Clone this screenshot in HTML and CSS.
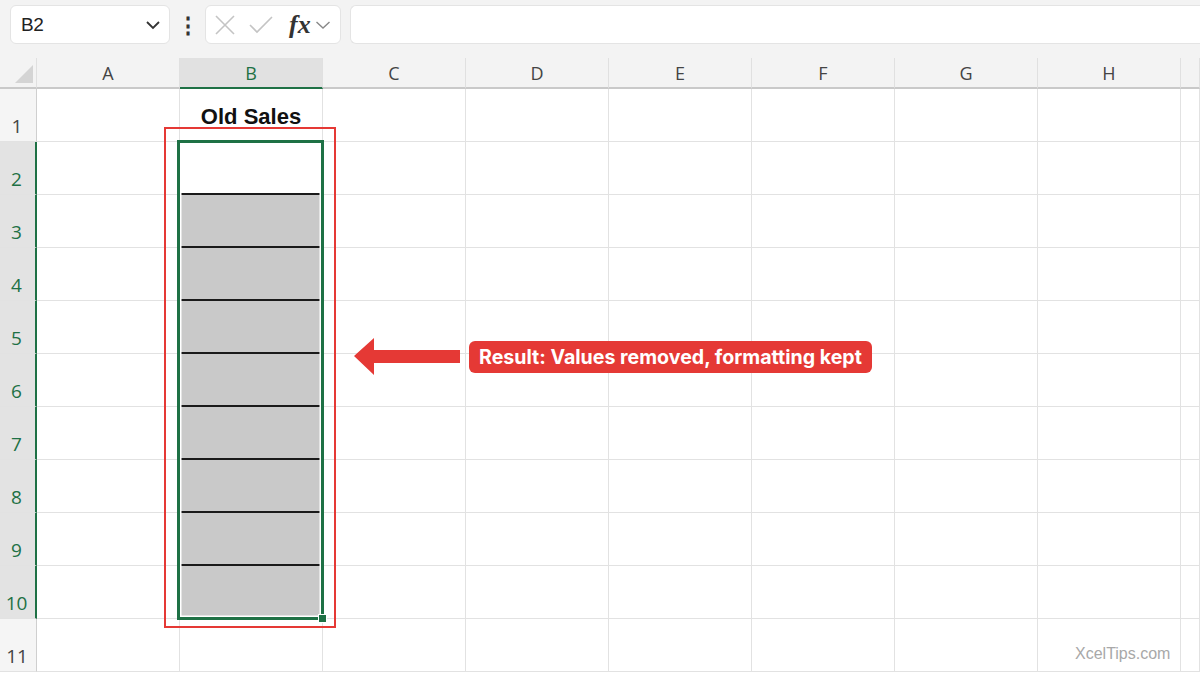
FILE: index.html
```html
<!DOCTYPE html>
<html lang="en">
<head>
  <meta charset="UTF-8" />
  <title>Old Sales</title>
  <link rel="stylesheet" href="styles.css">
</head>
<body>
  <div class="toolbar">
    <div class="name-box">
      <span>B2</span>
      <svg width="16" height="10" viewBox="0 0 16 10"><path d="M2 2 L8 8 L14 2" fill="none" stroke="#333" stroke-width="1.8"/></svg>
    </div>
    <div class="more">&#8942;</div>
    <div class="fx-box">
      <svg width="22" height="22" viewBox="0 0 22 22"><path d="M2 2 L20 20 M20 2 L2 20" stroke="#c4c4c4" stroke-width="1.6"/></svg>
      <svg width="26" height="22" viewBox="0 0 26 22"><path d="M2 11 L9 18 L24 3" fill="none" stroke="#c4c4c4" stroke-width="1.6"/></svg>
      <span class="fx">fx</span>
      <svg width="16" height="10" viewBox="0 0 16 10"><path d="M1.5 2 L8 8 L14.5 2" fill="none" stroke="#888" stroke-width="1.4"/></svg>
    </div>
    <div class="formula"></div>
  </div>

  <div class="sheet">
    <table class="grid">
      <colgroup>
        <col class="c-row"><col class="c-col"><col class="c-col"><col class="c-col"><col class="c-col">
        <col class="c-col"><col class="c-col"><col class="c-col"><col class="c-col"><col class="c-end">
      </colgroup>
      <thead>
        <tr>
          <th class="corner"><span class="tri"></span></th>
          <th>A</th><th class="sel">B</th><th>C</th><th>D</th><th>E</th><th>F</th><th>G</th><th>H</th><th></th>
        </tr>
      </thead>
      <tbody>
        <tr><th>1</th><td></td><td class="title">Old Sales</td><td></td><td></td><td></td><td></td><td></td><td></td><td></td></tr>
        <tr><th class="sel">2</th><td></td><td class="line"></td><td></td><td></td><td></td><td></td><td></td><td></td><td></td></tr>
        <tr><th class="sel">3</th><td></td><td class="shade line"></td><td></td><td></td><td></td><td></td><td></td><td></td><td></td></tr>
        <tr><th class="sel">4</th><td></td><td class="shade line"></td><td></td><td></td><td></td><td></td><td></td><td></td><td></td></tr>
        <tr><th class="sel">5</th><td></td><td class="shade line"></td><td></td><td></td><td></td><td></td><td></td><td></td><td></td></tr>
        <tr><th class="sel">6</th><td></td><td class="shade line"></td><td></td><td></td><td></td><td></td><td></td><td></td><td></td></tr>
        <tr><th class="sel">7</th><td></td><td class="shade line"></td><td></td><td></td><td></td><td></td><td></td><td></td><td></td></tr>
        <tr><th class="sel">8</th><td></td><td class="shade line"></td><td></td><td></td><td></td><td></td><td></td><td></td><td></td></tr>
        <tr><th class="sel">9</th><td></td><td class="shade line"></td><td></td><td></td><td></td><td></td><td></td><td></td><td></td></tr>
        <tr><th class="sel">10</th><td></td><td class="shade"></td><td></td><td></td><td></td><td></td><td></td><td></td><td></td></tr>
        <tr><th>11</th><td></td><td></td><td></td><td></td><td></td><td></td><td></td><td></td><td></td></tr>
      </tbody>
    </table>

    <div class="highlight"></div>
    <div class="selection"><span class="handle"></span></div>

    <svg class="arrow" width="110" height="42" viewBox="0 0 110 42">
      <polygon points="2,20 22,2 22,14 108,14 108,27 22,27 22,39" fill="#e53935"/>
    </svg>
    <div class="callout">Result: Values removed, formatting kept</div>
  </div>

  <div class="watermark">XcelTips.com</div>
</body>
</html>
```

FILE: styles.css
```css
body {
  margin: 0;
  width: 1200px;
  height: 675px;
  overflow: hidden;
  background: #fff;
  font-family: "Open Sans", "Noto Sans", sans-serif;
  position: relative;
}
.toolbar {
  height: 58px;
  box-sizing: border-box;
  padding: 5px 0 0 10px;
  background: #f3f3f3;
  display: flex;
  align-items: flex-start;
}
.name-box, .fx-box, .formula {
  height: 39px;
  box-sizing: border-box;
  background: #fff;
  border: 1px solid #e4e4e4;
  border-radius: 6px;
  display: flex;
  align-items: center;
}
.name-box {
  width: 160px;
  padding: 0 8px 0 10px;
  justify-content: space-between;
  font-family: "Liberation Sans", sans-serif;
  font-size: 19px;
  color: #222;
  letter-spacing: -0.5px;
}
.more {
  width: 35px;
  text-align: center;
  font-size: 22px;
  font-weight: bold;
  line-height: 39px;
  color: #333;
}
.fx-box {
  width: 136px;
  padding: 0 2px 0 8px;
  gap: 10px;
}
.fx-box svg:nth-child(2) { margin-left: 2px; }
.fx {
  font-family: "Liberation Serif", serif;
  font-style: italic;
  font-weight: bold;
  font-size: 26px;
  color: #333;
  margin-left: 5px;
  margin-right: -6px;
}
.formula {
  margin-left: 9px;
  flex: 1;
  border-right: none;
  border-radius: 6px 0 0 6px;
}

.sheet {
  position: relative;
}
.grid {
  border-collapse: separate;
  border-spacing: 0;
  table-layout: fixed;
  width: 1200px;
}
.c-row { width: 37px; }
.c-col { width: 143px; }
.c-end { width: 19px; }
.grid th, .grid td {
  padding: 0;
  border-right: 1px solid #e2e2e2;
  border-bottom: 1px solid #e2e2e2;
}
.grid thead th {
  height: 29px;
  background: #f3f3f3;
  border-right-color: #e0e0e0;
  border-bottom: 2px solid #c9c9c9;
  font-weight: normal;
  font-size: 18px;
  color: #444;
  text-align: center;
}
.grid thead th.sel {
  background: #e1e1e1;
  color: #1e7145;
  border-bottom: 2px solid #1e7145;
}
.grid thead th.corner {
  position: relative;
}
.tri {
  position: absolute;
  right: 3px;
  bottom: 4px;
  width: 0;
  height: 0;
  border-left: 18px solid transparent;
  border-bottom: 18px solid #d4d4d4;
}
.grid tbody tr { height: 53px; }
.grid tbody th {
  background: #f5f5f5;
  font-weight: normal;
  font-size: 19px;
  color: #444;
  vertical-align: bottom;
  padding: 0 2px 2px 0;
  border-right: 1px solid #cfcfcf;
}
.grid tbody th.sel {
  background: #e3e3e3;
  color: #1e7145;
  border-right: 2px solid #1e7145;
}
.title {
  font-family: "Liberation Sans", sans-serif;
  font-weight: bold;
  font-size: 22px;
  color: #111;
  text-align: center;
  vertical-align: bottom;
  padding-bottom: 11px !important;
}
.grid td.shade {
  background: #c9c9c9;
}
.grid td.line {
  border-bottom: 2px solid #1a1a1a;
}

.highlight {
  position: absolute;
  left: 164px;
  top: 69px;
  width: 172px;
  height: 501px;
  box-sizing: border-box;
  border: 2px solid #e53935;
}
.selection {
  position: absolute;
  left: 177px;
  top: 82px;
  width: 147px;
  height: 480px;
  box-sizing: border-box;
  border: 3px solid #1e7145;
  box-shadow: inset 0 0 0 1.5px #fff;
}
.handle {
  position: absolute;
  right: -6px;
  bottom: -6px;
  width: 7px;
  height: 7px;
  background: #1e7145;
  border: 1px solid #fff;
}
.arrow {
  position: absolute;
  left: 352px;
  top: 278px;
}
.callout {
  position: absolute;
  left: 469px;
  top: 283px;
  height: 32px;
  padding: 0 10px;
  border-radius: 6px;
  background: #e53935;
  color: #fff;
  font-family: Inter, Roboto, sans-serif;
  font-weight: bold;
  font-size: 19.6px;
  line-height: 32px;
  white-space: nowrap;
}
.watermark {
  position: absolute;
  left: 1075px;
  top: 645px;
  font-family: "Liberation Sans", sans-serif;
  font-size: 16px;
  color: #a8a8a8;
}
```
